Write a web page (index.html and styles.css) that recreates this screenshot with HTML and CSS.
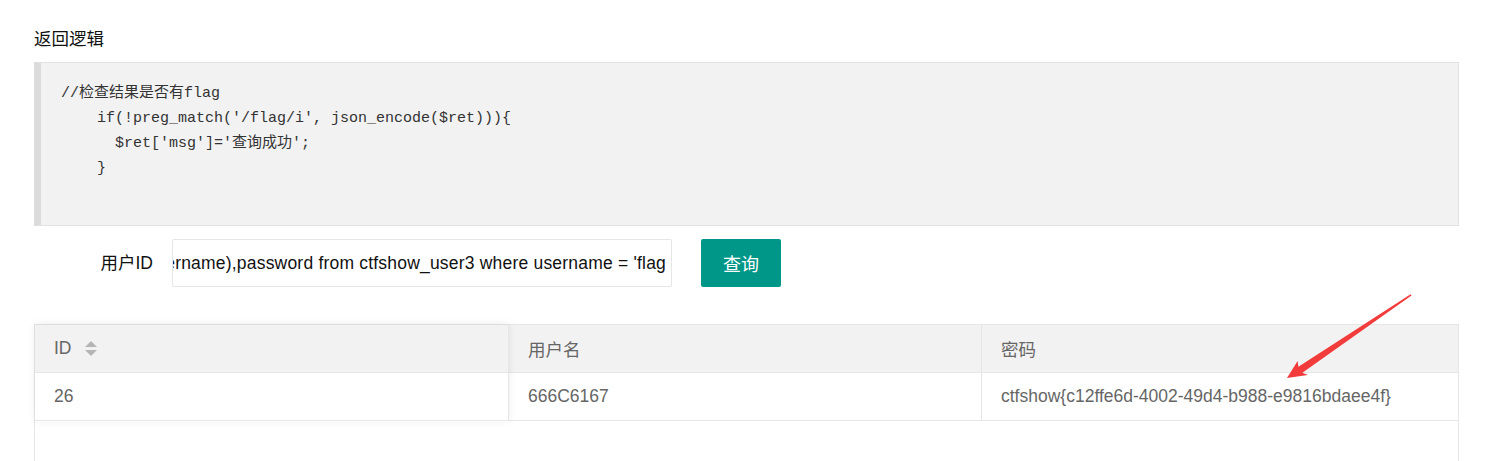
FILE: index.html
```html
<!DOCTYPE html>
<html lang="zh-CN">
<head>
<meta charset="utf-8">
<title>返回逻辑</title>
<link rel="stylesheet" href="styles.css">
</head>
<body>
<div class="page">
  <div class="section-title">返回逻辑</div>
  <pre class="code">//检查结果是否有flag
    if(!preg_match('/flag/i', json_encode($ret))){
      $ret['msg']='查询成功';
    }
</pre>
  <div class="form-row">
    <label class="form-label">用户ID</label>
    <div class="input"><span class="input-text">username),password from ctfshow_user3 where username = 'flag</span></div>
    <button class="btn" type="button">查询</button>
  </div>
  <div class="table">
    <div class="table-head">
      <div class="cell">ID <span class="sort"><i class="up"></i><i class="down"></i></span></div>
      <div class="cell">用户名</div>
      <div class="cell last">密码</div>
    </div>
    <div class="table-row">
      <div class="cell">26</div>
      <div class="cell">666C6167</div>
      <div class="cell last">ctfshow{c12ffe6d-4002-49d4-b988-e9816bdaee4f}</div>
    </div>
    <div class="fixed-shadow"></div>
  </div>
</div>
<svg class="arrow" width="1494" height="461" viewBox="0 0 1494 461" xmlns="http://www.w3.org/2000/svg">
  <polygon fill="#f23b3b" points="1287,378 1297.6,361 1298.4,366.8 1410.6,294.3 1411.5,295.5 1302.4,372.8 1307.8,375"/>
</svg>
</body>
</html>
```

FILE: styles.css
```css
html, body {
  margin: 0;
  padding: 0;
  background: #fff;
  overflow: hidden;
}

body {
  font-family: "Liberation Sans", Arial, "Noto Sans CJK SC", sans-serif;
  font-size: 17.5px;
  color: #222;
  position: relative;
  height: 461px;
}

.page {
  padding: 27px 35px 0 34px;
}

.section-title {
  line-height: 25px;
  height: 25px;
  margin-bottom: 10px;
  color: #111;
}

.code {
  margin: 0 0 13px 0;
  height: 125px;
  padding: 18px 19px 19px 20px;
  border: 1px solid #e2e2e2;
  border-left: 7px solid #dcdcdc;
  background: #f2f2f2;
  font-family: "Liberation Mono", "Courier New", "Noto Sans CJK SC", monospace;
  font-size: 15px;
  line-height: 25px;
  color: #333;
  white-space: pre;
}

.form-row {
  display: flex;
  align-items: center;
  height: 48px;
  margin-bottom: 37px;
}

.form-label {
  width: 138px;
  box-sizing: border-box;
  padding-right: 19px;
  text-align: right;
  color: #111;
  line-height: 25px;
}

.input {
  width: 500px;
  height: 48px;
  box-sizing: border-box;
  border: 1px solid #e6e6e6;
  border-radius: 2px;
  background: #fff;
  display: flex;
  justify-content: flex-end;
  align-items: center;
  overflow: hidden;
  padding: 0 5px 0 12px;
  color: #111;
  white-space: nowrap;
}

.input-text {
  flex: none;
  letter-spacing: 0.2px;
}

.btn {
  margin-left: 29px;
  width: 80px;
  height: 48px;
  border: none;
  border-radius: 2px;
  background: #009688;
  color: #fff;
  font-family: "Liberation Sans", Arial, "Noto Sans CJK SC", sans-serif;
  font-size: 18px;
  padding: 0;
}

.table {
  position: relative;
  border: 1px solid #e6e6e6;
  height: 200px;
  background: #fff;
}

.table-head,
.table-row {
  display: grid;
  grid-template-columns: 474px 473px 1fr;
}

.table-head {
  background: #f2f2f2;
}

.cell {
  height: 48px;
  box-sizing: border-box;
  border-right: 1px solid #e6e6e6;
  border-bottom: 1px solid #e6e6e6;
  padding: 0 19px;
  display: flex;
  align-items: center;
  color: #666;
  white-space: nowrap;
}

.cell.last {
  border-right: none;
}

.sort {
  display: inline-flex;
  flex-direction: column;
  align-items: center;
  margin-left: 13px;
  gap: 3px;
}

.sort i {
  display: block;
  width: 0;
  height: 0;
  border-left: 6px solid transparent;
  border-right: 6px solid transparent;
}

.sort .up {
  border-bottom: 6px solid #b5b5b5;
}

.sort .down {
  border-top: 6px solid #b5b5b5;
}

.fixed-shadow {
  position: absolute;
  left: 0;
  top: 0;
  width: 474px;
  height: 97px;
  box-shadow: 0 -1px 8px rgba(0, 0, 0, 0.08);
  pointer-events: none;
}

.arrow {
  position: absolute;
  left: 0;
  top: 0;
  pointer-events: none;
}
```
